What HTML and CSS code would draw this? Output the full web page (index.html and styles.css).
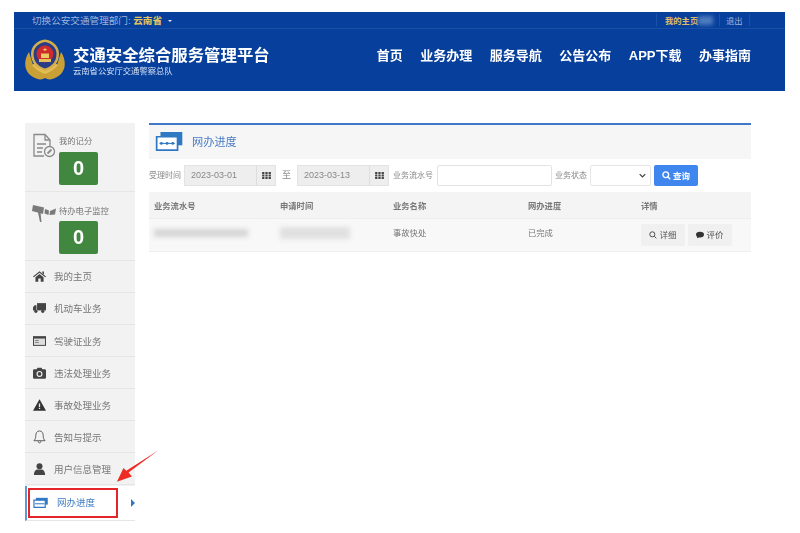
FILE: index.html
```html
<!DOCTYPE html>
<html lang="zh-CN">
<head>
  <meta charset="UTF-8" />
  <title>交通安全综合服务管理平台</title>
  <link rel="stylesheet" href="styles.css">
</head>
<body>
  <header class="header">
    <div class="topbar">
      <div class="topbar-left">切换公安交通管理部门: <b>云南省</b> <i class="caret"></i></div>
      <div class="topbar-right">
        <span class="home-link">我的主页<i class="name-blur"></i></span>
        <span class="logout">退出</span>
      </div>
    </div>
    <div class="brand-row">
      <div class="brand">
        <svg class="emblem" viewBox="0 0 40 42">
          <path d="M4 13 C-2 22 -1 33 8 38 C13 41 17 41 20 39 C23 41 27 41 32 38 C41 33 42 22 36 13 L32 26 H8Z" fill="#c9a035"/>
          <path d="M7 26 C11 31 15 33 20 35 C25 33 29 31 33 26 L30 24 H10Z" fill="#e2bd55"/>
          <path d="M20 0.500 C28 1.500 34 7 34 15 C34 24 28 30 20 32 C12 30 6 24 6 15 C6 7 12 1.500 20 0.500Z" fill="#d6ae4a"/>
          <path d="M20 3 C26 4 31.500 8 31.500 15 C31.500 23 26 28 20 29.500 C14 28 8.500 23 8.500 15 C8.500 8 14 4 20 3Z" fill="#2a3c86"/>
          <circle cx="20" cy="15" r="8.500" fill="#cf2a2c"/>
          <path d="M14 20 H26 V23 H14Z" fill="#e4c05a"/>
          <path d="M20 8.500 L21.300 12 L17.500 10 H22.500 L18.700 12Z" fill="#f1d46a"/>
          <path d="M16 14.500 H24 V19 H16Z" fill="#eccb63"/>
        </svg>
        <div class="brand-text">
          <div class="brand-title">交通安全综合服务管理平台</div>
          <div class="brand-sub">云南省公安厅交通警察总队</div>
        </div>
      </div>
      <nav class="nav">
        <a>首页</a>
        <a>业务办理</a>
        <a>服务导航</a>
        <a>公告公布</a>
        <a>APP下载</a>
        <a>办事指南</a>
      </nav>
    </div>
  </header>

  <div class="content">
    <aside class="sidebar">
      <div class="stat">
        <svg class="stat-icon" viewBox="0 0 24 26" fill="none" stroke="#8a8a8a" stroke-width="1.300">
          <path d="M18 13 V7 L13 1.500 H2 V23 H12"/>
          <path d="M13 1.500 V7 H18"/>
          <path d="M5 11 H14 M5 15 H11 M5 19 H10"/>
          <circle cx="17.500" cy="18.500" r="5"/>
          <path d="M15.500 20.500 L19.500 16.500" stroke-width="1.800"/>
        </svg>
        <div class="stat-body">
          <div class="stat-label">我的记分</div>
          <div class="stat-num">0</div>
        </div>
      </div>
      <div class="stat">
        <svg class="stat-icon cam" viewBox="0 0 24 17" fill="#7a7a7a">
          <path d="M1 0 L12 2.500 L11 9 L0 6Z"/>
          <path d="M6 7.500 H8.500 L9.500 17 H8Z"/>
          <path d="M13 4 L17 5.500 L16.500 10 L12.500 8.500Z"/>
          <path d="M18 6 L24 3.500 L23 9.500 L17.500 10Z"/>
        </svg>
        <div class="stat-body">
          <div class="stat-label">待办电子监控</div>
          <div class="stat-num">0</div>
        </div>
      </div>
      <a class="menu-item">
        <svg class="menu-icon" viewBox="0 0 16 14" fill="#444"><path d="M8 1 L16 7.500 L15 8.500 L8 3 L1 8.500 L0 7.500Z"/><path d="M3 8.500 L8 4.500 L13 8.500 V14 H9.500 V10 H6.500 V14 H3Z"/><path d="M11.500 1.500 H13.500 V5 L11.500 3.500Z"/></svg>
        我的主页
      </a>
      <a class="menu-item">
        <svg class="menu-icon" viewBox="0 0 16 12" fill="#444"><path d="M5 0 H16 V9 H5Z"/><path d="M0 5 L2 2.500 H4.300 V9 H0Z"/><circle cx="3.500" cy="10" r="2"/><circle cx="12" cy="10" r="2"/></svg>
        机动车业务
      </a>
      <a class="menu-item">
        <svg class="menu-icon" viewBox="0 0 16 12"><path d="M0 0 H16 V12 H0Z" fill="#444"/><path d="M1.200 3 H14.800 V10.800 H1.200Z" fill="#ddd"/><path d="M2.500 5 H7 V6 H2.500Z M2.500 7.500 H7 V8.500 H2.500Z" fill="#666"/></svg>
        驾驶证业务
      </a>
      <a class="menu-item">
        <svg class="menu-icon" viewBox="0 0 16 14" fill="#444"><path fill-rule="evenodd" d="M1.500 2.500 H4.500 L5.500 0.500 H10.500 L11.500 2.500 H14.500 Q16 2.500 16 4 V12.500 Q16 14 14.500 14 H1.500 Q0 14 0 12.500 V4 Q0 2.500 1.500 2.500Z M8 4.500 A3.700 3.700 0 1 0 8 11.900 A3.700 3.700 0 1 0 8 4.500Z"/><circle cx="8" cy="8.200" r="2.300"/></svg>
        违法处理业务
      </a>
      <a class="menu-item">
        <svg class="menu-icon" viewBox="0 0 16 14"><path d="M8 0 L16 14 H0Z" fill="#333"/><path d="M7.200 5 H8.800 V9.500 H7.200Z M7.200 10.500 H8.800 V12 H7.200Z" fill="#eee"/></svg>
        事故处理业务
      </a>
      <a class="menu-item">
        <svg class="menu-icon bell" viewBox="0 0 14 15" fill="none" stroke="#555" stroke-width="1"><path d="M7 1 C4 1 3 3.500 3 6 C3 9 2 10.500 1 11.500 H13 C12 10.500 11 9 11 6 C11 3.500 10 1 7 1Z"/><path d="M5.500 12 C5.500 14.500 8.500 14.500 8.500 12"/></svg>
        告知与提示
      </a>
      <a class="menu-item">
        <svg class="menu-icon" viewBox="0 0 14 14" fill="#444"><circle cx="7" cy="3.800" r="3.500"/><path d="M0.500 14 C0.500 9 3 7.500 4.500 7.500 H9.500 C11 7.500 13.500 9 13.500 14Z"/></svg>
        用户信息管理
      </a>
      <a class="menu-item active">
        <svg class="menu-icon wide" viewBox="0 0 18 13"><path d="M3 1 H17 V9 H3Z" fill="#2f78c4"/><path d="M0.700 3.700 H14 V12.300 H0.700Z" fill="#fff" stroke="#2f78c4" stroke-width="1.400"/><path d="M2 7.400 H13 V8.600 H2Z" fill="#2f78c4"/></svg>
        网办进度
        <i class="active-arrow"></i>
      </a>
    </aside>

    <main class="panel">
      <div class="panel-head">
        <svg class="panel-icon" viewBox="0 0 28 20">
          <path d="M5 0 H28 V14 H5Z" fill="#2f78c4"/>
          <path d="M1 5 H23 V19 H1Z" fill="#fff" stroke="#2f78c4" stroke-width="1.800"/>
          <path d="M4 12 H20" stroke="#2f78c4" stroke-width="1.100"/>
          <circle cx="6" cy="12" r="1.500" fill="#2f78c4"/><circle cx="12" cy="12" r="1.500" fill="#2f78c4"/><circle cx="18" cy="12" r="1.500" fill="#2f78c4"/>
        </svg>
        <span class="panel-title">网办进度</span>
      </div>

      <form class="filters">
        <label class="filter-label first">受理时间</label>
        <div class="date-box"><span>2023-03-01</span><i class="date-btn"><svg viewBox="0 0 10 8" fill="#444"><path d="M0 0H2.600V2.200H0Z M3.700 0H6.300V2.200H3.700Z M7.400 0H10V2.200H7.400Z M0 2.900H2.600V5.100H0Z M3.700 2.900H6.300V5.100H3.700Z M7.400 2.900H10V5.100H7.400Z M0 5.800H2.600V8H0Z M3.700 5.800H6.300V8H3.700Z M7.400 5.800H10V8H7.400Z"/></svg></i></div>
        <span class="to">至</span>
        <div class="date-box"><span>2023-03-13</span><i class="date-btn"><svg viewBox="0 0 10 8" fill="#444"><path d="M0 0H2.600V2.200H0Z M3.700 0H6.300V2.200H3.700Z M7.400 0H10V2.200H7.400Z M0 2.900H2.600V5.100H0Z M3.700 2.900H6.300V5.100H3.700Z M7.400 2.900H10V5.100H7.400Z M0 5.800H2.600V8H0Z M3.700 5.800H6.300V8H3.700Z M7.400 5.800H10V8H7.400Z"/></svg></i></div>
        <label class="filter-label">业务流水号</label>
        <div class="text-input"></div>
        <label class="filter-label status">业务状态</label>
        <div class="select-box"><svg viewBox="0 0 10 6" fill="none" stroke="#444" stroke-width="1.800"><path d="M1 1 L5 5 L9 1"/></svg></div>
        <button type="button" class="search-btn">
          <svg viewBox="0 0 12 12" fill="none" stroke="#fff" stroke-width="1.800"><circle cx="5" cy="5" r="3.800"/><path d="M8 8 L11 11"/></svg>
          <span>查询</span>
        </button>
      </form>

      <div class="table">
        <div class="row head">
          <div class="c1">业务流水号</div>
          <div class="c2">申请时间</div>
          <div class="c3">业务名称</div>
          <div class="c4">网办进度</div>
          <div class="c5">详情</div>
        </div>
        <div class="row body">
          <div class="c1"><i class="smear s1"></i></div>
          <div class="c2"><i class="smear s2"></i></div>
          <div class="c3">事故快处</div>
          <div class="c4">已完成</div>
          <div class="c5 actions">
            <a class="act-btn"><svg viewBox="0 0 12 12" fill="none" stroke="#444" stroke-width="1.400"><circle cx="5" cy="5" r="3.800"/><path d="M8 8 L11 11"/></svg><span>详细</span></a>
            <a class="act-btn"><svg viewBox="0 0 12 10" fill="#333"><ellipse cx="6" cy="4.300" rx="6" ry="4.300"/><path d="M2 6 L1.500 10 L6 7.500Z"/></svg><span>评价</span></a>
          </div>
        </div>
      </div>
    </main>
  </div>

  <div class="red-box"></div>
  <svg class="red-arrow" viewBox="0 0 46 36" preserveAspectRatio="none"><path d="M45 0.500 L13.500 24.500 L17 29 L1 34.500 L8 19.500 L11 22.500Z" fill="#ee2c24"/></svg>
</body>
</html>
```

FILE: styles.css
```css
* {
  margin: 0; padding: 0; box-sizing: border-box;
}
body {
  position: relative;
  width: 800px;
  height: 533px;
  overflow: hidden;
  background: #fff;
  font-family: "Liberation Sans", "Noto Sans CJK SC", sans-serif;
  color: #666;
  padding-top: 12px;
  filter: blur(0.4px);
}
.header {
  margin: 0 15px 0 14px;
  height: 79px;
  background: #063f9c;
  color: #fff;
}
.topbar {
  height: 17px;
  display: flex;
  justify-content: space-between;
  align-items: center;
  padding: 0 35px 0 18px;
  border-bottom: 1px solid #1a4fa6;
  font-size: 9.600px;
  color: #9db5dc;
}
.topbar b {
  color: #e6c65a;
}
.caret {
  display: inline-block;
  margin-left: 3px;
  vertical-align: 2px;
  border: 2.500px solid transparent;
  border-top-color: #dfe7f5;
  border-bottom: 0;
}
.topbar-right {
  display: flex;
  align-items: center;
  height: 16px;
  font-size: 8.300px;
}
.home-link {
  width: 64px;
  padding-left: 8px;
  color: #e0bd62;
  font-weight: bold;
  border-left: 1px solid #1c51a8;
  border-right: 1px solid #1c51a8;
  white-space: nowrap;
}
.name-blur {
  display: inline-block;
  width: 15px;
  height: 9px;
  vertical-align: -1px;
  background: #4f7dbf;
  filter: blur(2px);
}
.logout {
  width: 30px;
  padding-left: 6px;
  border-right: 1px solid #1c51a8;
}
.brand-row {
  height: 62px;
  display: flex;
  justify-content: space-between;
  align-items: center;
  padding: 0 34px 0 11px;
}
.brand {
  display: flex;
  align-items: center;
  gap: 8px;
}
.emblem {
  width: 40px;
  height: 42px;
}
.brand-title {
  font-size: 16.400px;
  font-weight: bold;
  line-height: 22px;
}
.brand-sub {
  font-size: 8.300px;
  line-height: 11px;
  color: #d5e0f2;
}
.nav {
  display: flex;
  gap: 17.500px;
  font-size: 13px;
  font-weight: bold;
  margin-top: -11px;
}
.content {
  display: flex;
  align-items: flex-start;
  gap: 14px;
  margin: 32px 49px 0 25px;
}
.sidebar {
  width: 110px;
  background: #f2f2f2;
  font-size: 9.500px;
}
.stat {
  height: 69px;
  display: flex;
  padding: 10px 0 0 7px;
  border-bottom: 1px solid #e6e6e6;
}
.stat-icon {
  width: 24px;
  height: 26px;
  flex: none;
}
.stat-icon.cam {
  height: 17px;
  margin-top: 3px;
}
.stat-body {
  margin-left: 3px;
}
.stat-label {
  font-size: 8.300px;
  line-height: 10px;
  margin-top: 3px;
  color: #777;
  white-space: nowrap;
}
.stat + .stat .stat-label {
  margin-top: 4px;
}
.stat-num {
  width: 39px;
  height: 33px;
  margin-top: 6px;
  background: #41873f;
  border-radius: 2px;
  color: #fff;
  font-size: 20px;
  font-weight: bold;
  line-height: 33px;
  text-align: center;
}
.stat + .stat .stat-num {
  margin-top: 5px;
}
.menu-item {
  height: 32px;
  display: flex;
  align-items: center;
  gap: 8px;
  padding: 0 0 2px 8px;
  border-bottom: 1px solid #e6e6e6;
  color: #777;
}
a.menu-item:nth-of-type(n+3) {
  padding-bottom: 0;
}
.menu-icon {
  width: 13px;
  height: 12px;
  flex: none;
}
.menu-icon.bell {
  height: 14px;
}
a.menu-item.active {
  position: relative;
  height: 35px;
  margin-top: 1px;
  padding: 0 0 2px 6px;
  background: #fff;
  border-left: 2px solid #5b9bd5;
  color: #3f7cc4;
}
.menu-icon.wide {
  width: 16px;
  height: 11px;
}
.active-arrow {
  position: absolute;
  right: 0;
  top: 13px;
  border: 4.500px solid transparent;
  border-left: 4px solid #2f78c4;
  border-right: 0;
}
.panel {
  width: 602px;
}
.panel-head {
  height: 36px;
  display: flex;
  align-items: center;
  gap: 9px;
  padding: 0 0 2px 6px;
  background: #f6f6f6;
  border-top: 2px solid #3f78c8;
}
.panel-icon {
  width: 28px;
  height: 19px;
}
.panel-title {
  color: #4a7cc4;
  font-size: 11.200px;
}
.filters {
  height: 33px;
  display: flex;
  align-items: center;
  font-size: 8px;
  color: #888;
}
.filter-label {
  white-space: nowrap;
  padding-bottom: 2px;
}
.filter-label.first {
  margin-right: 3px;
}
.date-box {
  width: 92px;
  height: 21px;
  display: flex;
  justify-content: space-between;
  background: #eee;
  border: 1px solid #e3e3e3;
  font-size: 9px;
  line-height: 19px;
  padding-left: 6px;
  color: #888;
}
.date-btn {
  width: 19px;
  display: flex;
  align-items: center;
  justify-content: center;
  border-left: 1px solid #ddd;
}
.date-btn svg {
  width: 9px;
  height: 7px;
}
.to {
  width: 21px;
  text-align: center;
  font-size: 9px;
  padding-bottom: 2px;
}
.filters .date-box + .filter-label {
  margin: 0 4px;
}
.text-input {
  width: 115px;
  height: 21px;
  background: #fff;
  border: 1px solid #e3e3e3;
  border-radius: 2px;
}
.filter-label.status {
  margin: 0 3px;
}
.select-box {
  width: 61px;
  height: 21px;
  display: flex;
  align-items: center;
  justify-content: flex-end;
  padding-right: 4px;
  border: 1px solid #e6e6e6;
  border-radius: 2px;
}
.select-box svg {
  width: 7px;
  height: 5px;
}
.search-btn {
  width: 44px;
  height: 21px;
  margin-left: 3px;
  display: flex;
  align-items: center;
  justify-content: center;
  gap: 2px;
  background: #3f86ee;
  border: none;
  border-radius: 2px;
  color: #fff;
  font-family: inherit;
  font-size: 8.500px;
  font-weight: bold;
}
.search-btn span,
.act-btn span {
  padding-bottom: 2px;
}
.search-btn svg {
  width: 9px;
  height: 9px;
}
.table {
  background: #f8f8f8;
  border-bottom: 1px solid #eee;
  font-size: 8.300px;
  color: #777;
}
.row {
  display: flex;
  align-items: center;
  padding-left: 5px;
}
.row.head {
  height: 27px;
  background: #f4f4f4;
  border-bottom: 1px solid #eee;
  font-weight: bold;
}
.row.body {
  height: 32px;
}
.row.body .c1,
.row.body .c2 {
  padding-bottom: 5px;
}
.row.body .c3,
.row.body .c4 {
  padding-bottom: 7px;
}
.c1 { width: 126px; }
.c2 { width: 113px; }
.c3 { width: 135px; }
.c4 { width: 113px; }
.smear {
  display: block;
  height: 8px;
  background: #d5d5d5;
  filter: blur(2.500px);
}
.smear.s1 {
  width: 94px;
}
.smear.s2 {
  width: 70px;
  height: 12px;
  background: #e0e0e0;
}
.actions {
  display: flex;
  gap: 3px;
}
.act-btn {
  width: 44px;
  height: 22px;
  display: flex;
  align-items: center;
  justify-content: center;
  gap: 2px;
  background: #f0f0f0;
  border-radius: 2px;
  color: #555;
  font-size: 8.500px;
}
.act-btn svg {
  width: 8px;
  height: 8px;
}
/* annotations on top of the screenshot */
.red-box {
  position: absolute;
  left: 28px;
  top: 488px;
  width: 90px;
  height: 30px;
  border: 2px solid #e4262b;
}
.red-arrow {
  position: absolute;
  left: 116px;
  top: 450px;
  width: 43px;
  height: 33px;
}
```
